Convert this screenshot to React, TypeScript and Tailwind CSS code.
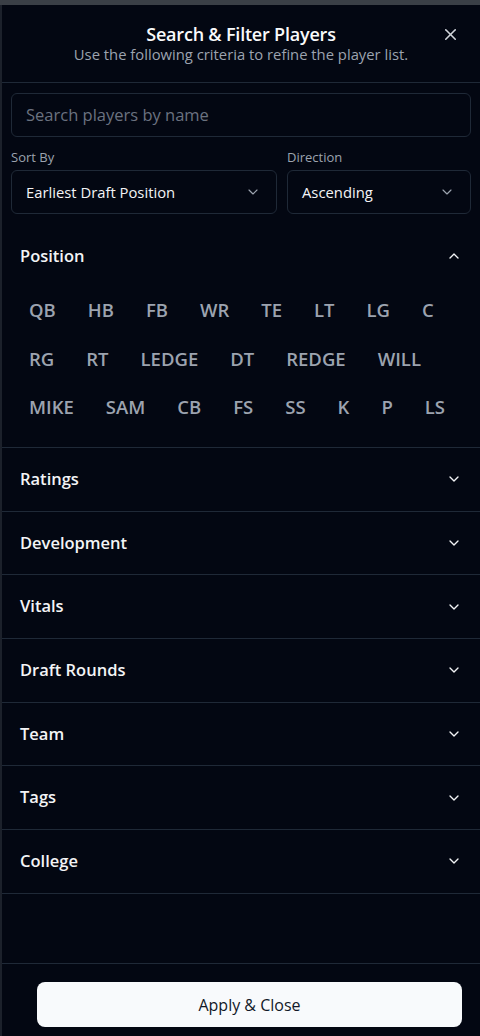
import { ChevronDown, ChevronUp, X } from "lucide-react"

const positions = [
  "QB", "HB", "FB", "WR", "TE", "LT", "LG", "C",
  "RG", "RT", "LEDGE", "DT", "REDGE", "WILL",
  "MIKE", "SAM", "CB", "FS", "SS", "K", "P", "LS",
]

const sections = ["Ratings", "Development", "Vitals", "Draft Rounds", "Team", "Tags", "College"]

function SelectBox({ label, value, className }: { label: string; value: string; className: string }) {
  return (
    <div className={className}>
      <div className="text-[13px] text-[#9ca3af] leading-4 mb-[5px]">{label}</div>
      <div className="h-[44px] rounded-md border border-[#1f2937] flex items-center justify-between pl-[14px] pr-[15px]">
        <span className="text-[14.8px] text-[#f3f4f6]">{value}</span>
        <ChevronDown className="h-4 w-4 text-[#9ca3af]" strokeWidth={1.75} />
      </div>
    </div>
  )
}

export default function App() {
  return (
    <div
      className="w-[480px] h-[1036px] bg-[#3a3f46] pt-[5px] overflow-hidden"
      style={{ fontFamily: '"Open Sans", "Noto Sans", sans-serif' }}
    >
      <div className="h-full bg-[#030712] border-l-2 border-[#1c212b] flex flex-col">
        {/* Header */}
        <div className="relative h-[78px] border-b border-[#1f2937] flex flex-col items-center pt-[17px]">
          <h2 className="text-[18px] font-semibold text-[#f9fafb] leading-6 tracking-[-0.2px]">
            Search &amp; Filter Players
          </h2>
          <p className="text-[14.8px] text-[#9ca3af] leading-5 -mt-[2px]">
            Use the following criteria to refine the player list.
          </p>
          <X className="absolute right-[20px] top-[20px] h-[19px] w-[19px] text-[#d1d5db]" strokeWidth={2} />
        </div>

        {/* Search + sort */}
        <div className="px-[9px] pt-[10px]">
          <div className="h-[44px] rounded-md border border-[#1f2937] flex items-center px-[14px]">
            <span className="text-[16.5px] text-[#6b7280]">Search players by name</span>
          </div>
          <div className="flex gap-[10px] mt-[12px]">
            <SelectBox label="Sort By" value="Earliest Draft Position" className="w-[266px]" />
            <SelectBox label="Direction" value="Ascending" className="flex-1" />
          </div>
        </div>

        {/* Position */}
        <div className="border-b border-[#1f2937] mt-[12px]">
          <div className="h-[60px] flex items-center justify-between pl-[18px] pr-[18px]">
            <span className="text-[16.5px] font-semibold text-[#f3f4f6]">Position</span>
            <ChevronUp className="h-4 w-4 text-[#f3f4f6]" strokeWidth={2} />
          </div>
          <div className="flex flex-wrap gap-x-[8px] gap-y-[8.5px] pl-[15px] pr-[10px] pb-[20px] mt-[4px]">
            {positions.map((p) => (
              <button
                key={p}
                className="h-[40px] px-[12px] text-[18.5px] font-semibold text-[#9ca3af]"
              >
                {p}
              </button>
            ))}
          </div>
        </div>

        {/* Collapsed sections */}
        {sections.map((s) => (
          <div
            key={s}
            className="h-[63.7px] border-b border-[#1f2937] flex items-center justify-between pl-[18px] pr-[18px]"
          >
            <span className="text-[16.5px] font-semibold text-[#f3f4f6]">{s}</span>
            <ChevronDown className="h-4 w-4 text-[#f3f4f6]" strokeWidth={2} />
          </div>
        ))}

        <div className="flex-1" />

        {/* Footer */}
        <div className="border-t border-[#1f2937] h-[73px] pt-[18px] pl-[35px] pr-[18px]">
          <button className="w-full h-[45px] rounded-lg bg-[#f8fafc] text-[16px] text-[#111827]">
            Apply &amp; Close
          </button>
        </div>
      </div>
    </div>
  )
}
